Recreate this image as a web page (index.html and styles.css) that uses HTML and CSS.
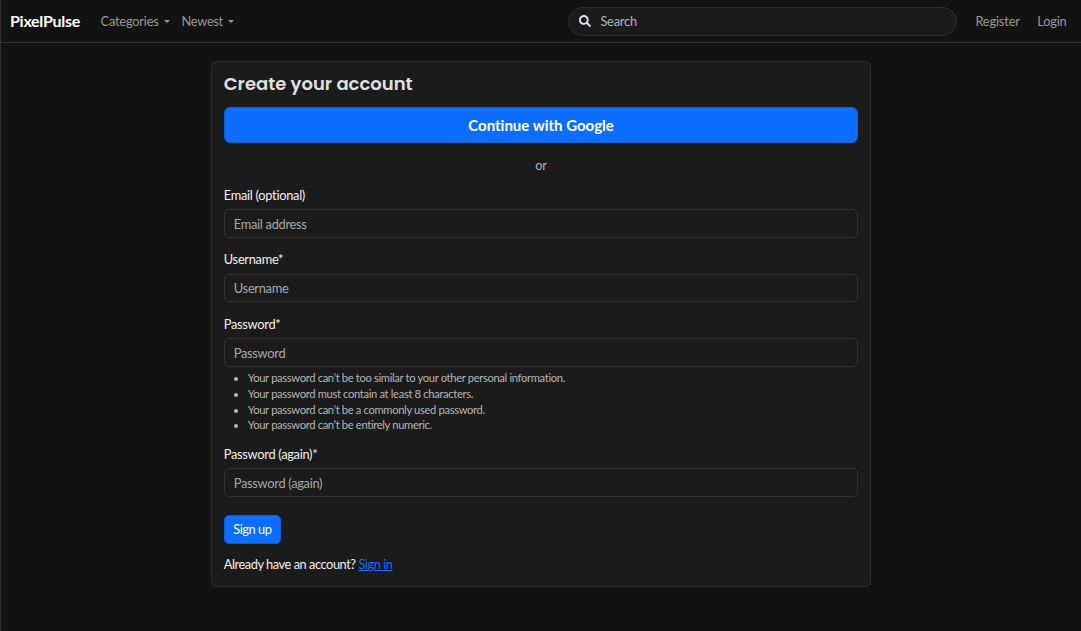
FILE: index.html
```html
<!DOCTYPE html>
<html lang="en">
<head>
<meta charset="utf-8">
<title>PixelPulse</title>
<link rel="stylesheet" href="styles.css">
</head>
<body>
<nav class="navbar">
  <a class="brand">PixelPulse</a>
  <a class="nav-link categories">Categories<span class="caret"></span></a>
  <a class="nav-link newest">Newest<span class="caret"></span></a>
  <div class="search">
    <svg class="search-icon" viewBox="0 0 512 512" fill="currentColor"><path d="M505 442.700L405.300 343c-4.500-4.500-10.600-7-17-7H372c27.600-35.300 44-79.700 44-128C416 93.100 322.900 0 208 0S0 93.100 0 208s93.100 208 208 208c48.300 0 92.700-16.400 128-44v16.300c0 6.400 2.500 12.500 7 17l99.700 99.700c9.400 9.400 24.600 9.400 33.900 0l28.300-28.300c9.400-9.400 9.400-24.600.1-34zM208 336c-70.700 0-128-57.200-128-128 0-70.700 57.200-128 128-128 70.700 0 128 57.200 128 128 0 70.700-57.200 128-128 128z"/></svg>
    <span class="search-text">Search</span>
  </div>
  <a class="nav-link register">Register</a>
  <a class="nav-link login">Login</a>
</nav>
<main class="card">
  <h1 class="title">Create your account</h1>
  <button class="btn google">Continue with Google</button>
  <p class="or">or</p>
  <form>
    <div class="field"><label class="label">Email (optional)</label><input class="input" type="email" placeholder="Email address"></div>
    <div class="field"><label class="label">Username*</label><input class="input" type="text" placeholder="Username"></div>
    <div class="field"><label class="label">Password*</label><input class="input" type="password" placeholder="Password">
      <ul class="hints">
        <li>Your password can’t be too similar to your other personal information.</li>
        <li>Your password must contain at least 8 characters.</li>
        <li>Your password can’t be a commonly used password.</li>
        <li>Your password can’t be entirely numeric.</li>
      </ul>
    </div>
    <div class="field"><label class="label">Password (again)*</label><input class="input" type="password" placeholder="Password (again)"></div>
    <button class="btn signup" type="button">Sign up</button>
  </form>
  <p class="signin"><span class="question">Already have an account?</span> <a class="link">Sign in</a></p>
</main>
</body>
</html>
```
FILE: styles.css
```css
* { box-sizing: border-box; }
body {
  margin: 0;
  height: 631px;
  overflow: hidden;
  border-left: 1px solid #303030;
  background: #121212;
  color: #f0f0f0;
  font: 12.8px/19.2px Lato, sans-serif;
  letter-spacing: -0.28px;
}
.navbar {
  display: flex;
  align-items: center;
  height: 43px;
  padding: 0 14.500px 0 9px;
  border-bottom: 1px solid #303030;
}
.brand { font-size: 16px; font-weight: 700; color: #fff; margin-right: 20.600px; }
.nav-link { padding-top: 2px; color: #999; letter-spacing: -0.2px; }
.categories { margin-right: 12px; }
.caret {
  display: inline-block;
  margin-left: 5px;
  vertical-align: 3px;
  border-top: 3px solid;
  border-left: 3px solid transparent;
  border-right: 3px solid transparent;
}
.newest { letter-spacing: -0.300px; }
.search {
  display: flex;
  align-items: center;
  width: 389px;
  height: 29px;
  margin-left: auto;
  margin-right: 18px;
  padding-left: 10px;
  border: 1px solid #2c2c2c;
  border-radius: 15px;
  background: #1b1b1b;
  color: #adb5bd;
}
.search-text { padding-top: 2px; letter-spacing: -0.200px; }
.search-icon { width: 12px; height: 12px; margin-right: 9px; color: #dee2e6; }
.register { margin-right: 17.500px; letter-spacing: -0.150px; }
.login { letter-spacing: -0.2px; }
.card {
  width: 660.500px;
  height: 525.500px;
  margin: 18px 0 0 209.800px;
  padding: 9px 12px 0;
  border: 1px solid #2c2c2c;
  border-radius: 5px;
  background: #1b1b1b;
}
.title {
  margin: 0 0 10px;
  font: 600 18px/26.400px Poppins, Inter, sans-serif;
  letter-spacing: 0;
  color: #e0e0e0;
}
.btn {
  display: block;
  border: 1px solid #0b5ed7;
  border-radius: 5px;
  background: #0d6efd;
  color: #fff;
  font: 12.8px/19.2px Lato, sans-serif;
}
.google {
  width: 100%;
  height: 36px;
  padding: 0;
  border-radius: 6px;
  font-size: 15px;
  font-weight: 700;
  font-variant-ligatures: none;
}
.or { margin: 12.300px 0 10.900px; text-align: center; color: #b0b0b0; }
.field { margin-bottom: 12.500px; }
.label { display: block; margin-bottom: 4.200px; }
.input {
  display: block;
  width: 100%;
  height: 28.800px;
  padding: 0 9px;
  border: 1px solid #303030;
  border-radius: 5px;
  background: #1b1b1b;
  color: #fff;
  font: 12.8px/19.2px Lato, sans-serif;
  letter-spacing: -0.28px;
}
.field + .field { margin-top: -0.200px; }
.input::placeholder { color: #a8a8a8; opacity: 1; }
.hints {
  margin: 3.400px 0 0;
  padding-left: 24px;
  font-size: 11.200px;
  line-height: 15.600px;
  letter-spacing: -0.34px;
  color: #b5b5b5;
}
.signup { height: 29px; margin-top: 17.500px; padding: 0 8.500px; letter-spacing: -0.45px; }
.signin { margin: 11.700px 0 0; letter-spacing: -0.45px; }
.link { color: #0d6efd; text-decoration: underline; }
```
